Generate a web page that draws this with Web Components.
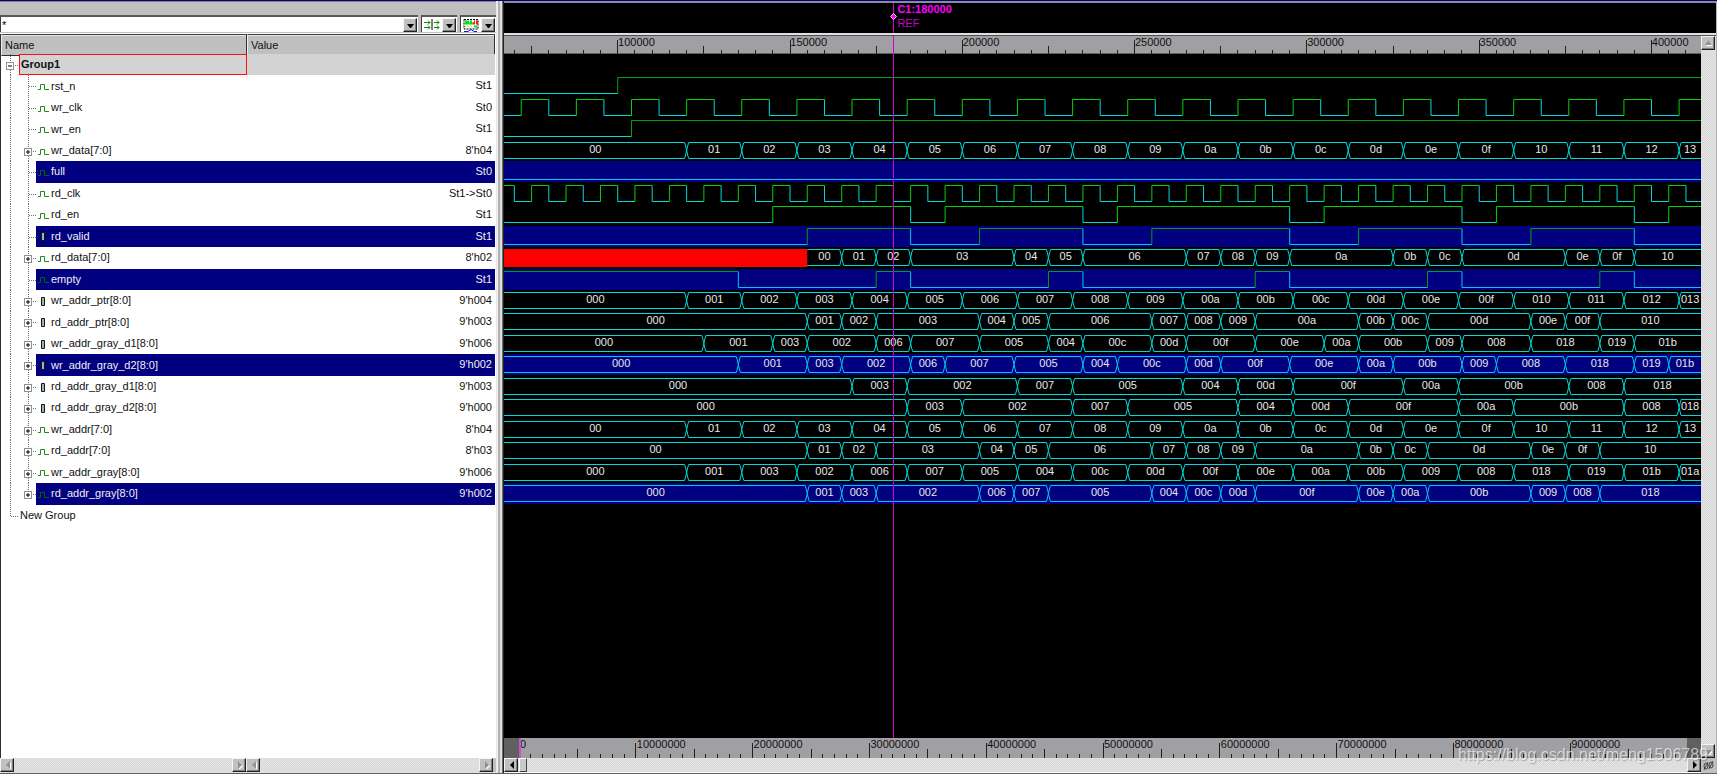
<!DOCTYPE html>
<html lang="en">
<head>
<meta charset="utf-8">
<title>Waveform viewer</title>
<style>
html, body { margin: 0; height: 100%; }
body { font: 11px/18px "Liberation Sans", Arial, sans-serif; background: #c0c0c0; color: #101010; overflow: hidden; }
</style>
</head>
<body>
<wave-app></wave-app>
<script>
const VIEW = { from: 67000, to: 414360 };
const SPAN = VIEW.to - VIEW.from;
const CURSOR = 180000;
const pct = t => ((t - VIEW.from) / SPAN * 100) + '%';

const level = (initial, ...edges) => ({ kind: 'level', initial, edges });
const clock = (start, half) => {
  const edges = [];
  for (let t = start; t < VIEW.to; t += half) edges.push(t / 1000);
  return edges;
};
const bus = text => {
  const parts = text.split(' ');
  const segments = [];
  let from = VIEW.from;
  parts.forEach((p, i) => {
    const [value, end] = p.split('@');
    const to = end ? end * 1000 : VIEW.to;
    segments.push({ value, from, to });
    from = to;
  });
  return { kind: 'bus', segments };
};
const counter = values => bus(values.split(' ').map((v, i, all) => i < all.length - 1 ? v + '@' + (120 + 16 * i) : v).join(' '));

const SIGNALS = [
  { name: 'rst_n', value: 'St1', wave: level(0, 100) },
  { name: 'wr_clk', value: 'St0', wave: level(0, ...clock(72000, 8000)) },
  { name: 'wr_en', value: 'St1', wave: level(0, 104) },
  { name: 'wr_data[7:0]', value: "8'h04", wave: counter('00 01 02 03 04 05 06 07 08 09 0a 0b 0c 0d 0e 0f 10 11 12 13') },
  { name: 'full', value: 'St0', selected: true, wave: level(0) },
  { name: 'rd_clk', value: 'St1->St0', wave: level(1, ...clock(70000, 5000)) },
  { name: 'rd_en', value: 'St1', wave: level(0, 145, 185, 195, 235, 245, 295, 305, 345, 355, 395, 405) },
  { name: 'rd_valid', value: 'St1', selected: true, reg: true, wave: level(0, 155, 185, 205, 235, 255, 295, 315, 345, 365, 395) },
  { name: 'rd_data[7:0]', value: "8'h02", wave: bus('x@155 00@165 01@175 02@185 03@215 04@225 05@235 06@265 07@275 08@285 09@295 0a@325 0b@335 0c@345 0d@375 0e@385 0f@395 10') },
  { name: 'empty', value: 'St1', selected: true, wave: level(1, 135, 175, 185, 225, 235, 285, 295, 335, 345, 385, 395) },
  { name: 'wr_addr_ptr[8:0]', value: "9'h004", reg: true, wave: counter('000 001 002 003 004 005 006 007 008 009 00a 00b 00c 00d 00e 00f 010 011 012 013') },
  { name: 'rd_addr_ptr[8:0]', value: "9'h003", reg: true, wave: bus('000@155 001@165 002@175 003@205 004@215 005@225 006@255 007@265 008@275 009@285 00a@315 00b@325 00c@335 00d@365 00e@375 00f@385 010') },
  { name: 'wr_addr_gray_d1[8:0]', value: "9'h006", reg: true, wave: bus('000@125 001@145 003@155 002@175 006@185 007@205 005@225 004@235 00c@255 00d@265 00f@285 00e@305 00a@315 00b@335 009@345 008@365 018@385 019@395 01b') },
  { name: 'wr_addr_gray_d2[8:0]', value: "9'h002", selected: true, reg: true, wave: bus('000@135 001@155 003@165 002@185 006@195 007@215 005@235 004@245 00c@265 00d@275 00f@295 00e@315 00a@325 00b@345 009@355 008@375 018@395 019@405 01b') },
  { name: 'rd_addr_gray_d1[8:0]', value: "9'h003", reg: true, wave: bus('000@168 003@184 002@216 007@232 005@264 004@280 00d@296 00f@328 00a@344 00b@376 008@392 018') },
  { name: 'rd_addr_gray_d2[8:0]', value: "9'h000", reg: true, wave: bus('000@184 003@200 002@232 007@248 005@280 004@296 00d@312 00f@344 00a@360 00b@392 008@408 018') },
  { name: 'wr_addr[7:0]', value: "8'h04", wave: counter('00 01 02 03 04 05 06 07 08 09 0a 0b 0c 0d 0e 0f 10 11 12 13') },
  { name: 'rd_addr[7:0]', value: "8'h03", wave: bus('00@155 01@165 02@175 03@205 04@215 05@225 06@255 07@265 08@275 09@285 0a@315 0b@325 0c@335 0d@365 0e@375 0f@385 10') },
  { name: 'wr_addr_gray[8:0]', value: "9'h006", wave: counter('000 001 003 002 006 007 005 004 00c 00d 00f 00e 00a 00b 009 008 018 019 01b 01a') },
  { name: 'rd_addr_gray[8:0]', value: "9'h002", selected: true, wave: bus('000@155 001@165 003@175 002@205 006@215 007@225 005@255 004@265 00c@275 00d@285 00f@315 00e@325 00a@335 00b@365 009@375 008@385 018') }
];

class Base extends HTMLElement {
  connectedCallback() {
    if (!this.shadowRoot) this.attachShadow({ mode: 'open' }).innerHTML =
      `<style>:host{display:block;box-sizing:border-box;min-width:0}*{box-sizing:border-box}</style>` + this.view();
  }
}

/* Bevelled arrow button */
customElements.define('arrow-button', class extends Base {
  view() {
    const shapes = { down: 'M0 3H7L4 7H3Z', up: 'M0 6H7L4 2H3Z', left: 'M2 4L6 0V8Z', right: 'M6 4L2 0V8Z' };
    const dir = this.getAttribute('dir-to');
    const off = this.hasAttribute('off');
    return `<style>
      :host { width: 14px; height: 14px; flex: none; }
      button { display: flex; align-items: center; justify-content: center; width: 100%; height: 100%; padding: 0; margin: 0;
        background: #c0c0c0; border: 1px solid; border-color: #f4f4f4 #202020 #202020 #f4f4f4; box-shadow: inset -1px -1px #808080; border-radius: 0; }
      svg { width: 7px; height: 8px; }
    </style><button type="button" aria-label="${this.getAttribute('label')}"><svg viewBox="0 0 7 8">
      ${off ? `<path d="${shapes[dir]}" fill="#fff" transform="translate(1 1)"/>` : ''}
      <path d="${shapes[dir]}" fill="${off ? '#909090' : '#000'}"/></svg></button>`;
  }
});

/* Scroll bar: arrow buttons at both ends of a stippled track */
customElements.define('scroll-bar', class extends Base {
  view() {
    const vertical = this.hasAttribute('vertical');
    const off = this.hasAttribute('on') ? '' : 'off';
    return `<style>
      :host { display: flex; flex-direction: ${vertical ? 'column' : 'row'};
        background: repeating-conic-gradient(#d8d8d8 0 25%, #e4e4e4 0 50%) 0 0 / 2px 2px; }
      .track { flex: 1; display: flex; }
      .thumb { width: 8px; margin-left: 1px; background: #c8c8c8; border: 1px solid; border-color: #fff #404040 #404040 #fff; }
    </style>
    <arrow-button dir-to="${vertical ? 'up' : 'left'}" ${off} label="Scroll back"></arrow-button>
    <div class="track">${this.hasAttribute('on') ? '<div class="thumb"></div>' : ''}</div>
    <arrow-button dir-to="${vertical ? 'down' : 'right'}" ${off} label="Scroll forward"></arrow-button>`;
  }
});

/* Filter box and the two icon drop-downs */
customElements.define('filter-bar', class extends Base {
  view() {
    return `<style>
      :host { display: flex; gap: 3px; padding: 13px 0 0; height: 31px; background: #c0c0c0; }
      .box { display: flex; align-items: center; height: 17px; background: #fff; border-top: 2px solid #585858; border-left: 1px solid #404040; padding-right: 1px; }
      .box.wide { flex: 1; }
      input { flex: 1; min-width: 0; border: 0; padding: 0 0 0 1px; height: 14px; font: 11px/14px "Liberation Sans", sans-serif; outline: 0; background: none; color: #000; }
      svg { margin: 0 2px; width: 16px; height: 14px; }
    </style>
    <div class="box wide"><input aria-label="Signal filter" value="*"><arrow-button dir-to="down" label="Filter history"></arrow-button></div>
    <div class="box"><svg viewBox="0 0 16 14" fill="none" stroke="#0a8a0a">
      <path d="M0 4.500H6M0 9.500H6M10 4.500H15M10 9.500H15M4 2.500L6 4.500L4 6.500M4 7.500L6 9.500L4 11.500M13 2.500L15 4.500L13 6.500M13 7.500L15 9.500L13 11.500"/>
      <path d="M8 1V12" stroke="#000"/></svg><arrow-button dir-to="down" label="Search direction"></arrow-button></div>
    <div class="box"><svg viewBox="0 0 16 14" fill="none">
      <path d="M1 1.500H15V11H1Z" stroke="#000" stroke-dasharray="2 1"/>
      <path d="M2 3.500H6M2 5.500H10M7 3.500H9M11 8.500H14" stroke="#00e020" stroke-width="2"/>
      <path d="M10 5.500H12M11 3.500H12M13 3.500H15M13 5.500H15" stroke="#ff1010" stroke-width="2"/>
      <path d="M2 8.500H9" stroke="#f0f080" stroke-width="2"/>
      <path d="M1 13.500H5L8 11.500L11 13.500H14" stroke="#1010f0"/></svg><arrow-button dir-to="down" label="Signal event"></arrow-button></div>`;
  }
});

/* Dotted tree guides with an optional expander */
customElements.define('tree-guide', class extends Base {
  view() {
    const kind = this.getAttribute('kind');
    const last = this.hasAttribute('last');
    const dot = 'fill="none" stroke="#707070" stroke-dasharray="1 1"';
    let lines = '', box = '', x = 0;
    if (kind === 'group') {
      lines = `<path d="M9.500 0V30M14 11.500H18" ${dot}/>`; x = 5; box = '-';
    } else if (kind === 'end') {
      lines = `<path d="M9.500 0V11.500H18" ${dot}/>`;
    } else {
      lines = `<path d="M9.500 0V30M27.500 0V${last ? 12 : 30}M28 11.500H36" ${dot}/>`;
      if (kind === 'bus') { x = 23; box = '+'; }
    }
    return `<style>
      :host { position: relative; flex: none; width: ${kind === 'group' || kind === 'end' ? 18 : 35}px; align-self: stretch; }
      svg.g { display: block; width: 100%; height: 100%; }
      button { position: absolute; left: ${x}px; top: 8px; width: 8px; height: 8px; padding: 0; border: 1px solid #909090; background: #fff; border-radius: 0; display: flex; }
      button svg { width: 6px; height: 6px; }
    </style><svg class="g">${lines}</svg>` +
    (box ? `<button type="button" aria-label="${box === '+' ? 'Expand' : 'Collapse'}"><svg viewBox="0 0 6 6"><path d="M1 3H5${box === '+' ? 'M3 1V5' : ''}" stroke="#000"/></svg></button>` : '');
  }
});

customElements.define('signal-icon', class extends Base {
  view() {
    const dim = this.hasAttribute('dim');
    return `<style>:host { flex: none; width: 12px; height: 10px; margin: 2px 1px 0 2px; } svg { display: block; width: 12px; height: 10px; }</style>
    <svg viewBox="0 0 12 10">` + (this.hasAttribute('reg')
      ? `<path d="M3.500 .5H6.500V8.500H3.500Z" fill="#9db4a8" stroke="#101810" />`
      : `<path d="M0 7.500H2.500V2.500H6.500V7.500H11" fill="none" stroke="${dim ? '#006400' : '#1e8c1e'}"/>`) + '</svg>';
  }
});

customElements.define('signal-table', class extends Base {
  view() {
    const rows = SIGNALS.map((s, i) => {
      const kind = s.name.includes('[') ? 'bus' : 'leaf';
      return `<tr class="${s.selected ? 'sel' : ''}"><td class="name"><tree-guide kind="${kind}" ${i === SIGNALS.length - 1 ? 'last' : ''}></tree-guide><span class="label"><signal-icon ${s.reg ? 'reg' : ''} ${s.selected ? 'dim' : ''}></signal-icon>${s.name}</span></td><td class="value">${s.value.replace('>', '&gt;')}</td></tr>`;
    }).join('');
    return `<style>
      :host { flex: 1; background: #fff; border-left: 1px solid #303030; }
      table { display: grid; grid-template-rows: 20px repeat(22, 1fr); height: 492px; line-height: 21px; margin-right: 1px; }
      thead, tbody { display: contents; }
      tr { display: grid; grid-template-columns: 246px 1fr; min-height: 0; }
      th { text-align: left; font-weight: normal; background: #c0c0c0; padding: 0 0 0 3px; line-height: 20px;
        border: 1px solid; border-top-color: #404040; border-left-color: #eee; border-right-color: #303030; border-bottom-color: #303030; box-shadow: inset 0 1px #e8e8e8; }
      td { padding: 0; display: flex; min-width: 0; min-height: 0; white-space: nowrap; }
      .label { display: flex; flex: 1; align-items: center; height: 100%; }
      .value { justify-content: flex-end; padding-right: 3px; }
      .sel .label, .sel .value { background: #000080; color: #f0f0f0; }
      .group .label { border: 1px solid #ff1010; background: #d3d3d3; font-weight: bold; padding-left: 1px; }
      .group .value { background: #d3d3d3; }
      .end .label { padding-left: 1px; }
    </style>
    <table><thead><tr><th>Name</th><th>Value</th></tr></thead>
    <tbody><tr class="group"><td class="name"><tree-guide kind="group"></tree-guide><span class="label">Group1</span></td><td class="value"></td></tr>
    ${rows}
    <tr class="end"><td class="name"><tree-guide kind="end"></tree-guide><span class="label">New Group</span></td><td></td></tr></tbody></table>`;
  }
});

customElements.define('signal-pane', class extends Base {
  view() {
    return `<style>
      :host { display: flex; flex-direction: column; width: 496px; border-top: 1px solid #808080; }
      .rule { height: 1px; background: #fff; }
      .bars { display: grid; grid-template-columns: 246px 247px; height: 15px; background: #c0c0c0; border-bottom: 1px solid #e0e0e0; }
    </style>
    <filter-bar></filter-bar><div class="rule"></div><signal-table></signal-table>
    <div class="bars"><scroll-bar></scroll-bar><scroll-bar></scroll-bar></div>`;
  }
});

/* Time ruler with ticks drawn in time units and labels laid out as equal cells */
customElements.define('time-ruler', class extends Base {
  view() {
    const n = k => Number(this.getAttribute(k));
    const from = n('from'), to = n('to'), step = n('step'), tall = n('tall'), mid = n('mid'), h = n('height');
    const minor = step / 10;
    let d = '';
    for (let t = Math.ceil(from / minor) * minor; t < to; t += minor) {
      const len = t % step === 0 ? tall : t % (step / 2) === 0 ? mid : 4;
      const x = (t - from) / (to - from) * 1000;
      d += `M${x} ${h - len}V${h}`;
    }
    const first = Math.ceil(from / step) * step;
    let labels = `<i style="flex:${first - from} 0 0"></i>`;
    for (let t = first; t < to; t += step) labels += `<span style="flex:${Math.min(step, to - t)} 0 0">${t}</span>`;
    return `<style>
      :host { display: grid; height: ${h}px; background: #a0a0a4; color: #101010; }
      svg, div { grid-area: 1 / 1; width: 100%; height: ${h}px; min-width: 0; }
      path { stroke: #202020; fill: none; vector-effect: non-scaling-stroke; shape-rendering: crispEdges; }
      div { display: flex; line-height: ${n('line')}px; }
      span, i { min-width: 0; padding-left: 1px; white-space: nowrap; }
      i { padding: 0; }
    </style><svg viewBox="0 0 1000 ${h}" preserveAspectRatio="none"><path d="${d}"/></svg><div>${labels}</div>`;
  }
});

/* One signal's trace */
customElements.define('wave-trace', class extends Base {
  view() {
    const s = SIGNALS[this.getAttribute('index')];
    const w = s.wave;
    const X = t => (t - VIEW.from) / 1000;
    const END = SPAN / 1000, HI = 2.5, LO = 18.5;
    let green = '', cyan = '', red = '', text = '';
    if (w.kind === 'level') {
      let on = w.initial, x = 0;
      for (const e of [...w.edges.map(v => X(v * 1000)), END]) {
        const y = on ? HI : LO;
        if (on) green += `M${x} ${y}H${e}`; else cyan += `M${x} ${y}H${e}`;
        if (e < END) { if (on) cyan += `M${e} ${HI}V${LO}`; else green += `M${e} ${LO}V${HI}`; }
        on = !on; x = e;
      }
    } else {
      w.segments.forEach((g, i) => {
        const a = X(g.from), b = X(g.to), last = i === w.segments.length - 1;
        const prevX = i > 0 && w.segments[i - 1].value === 'x';
        if (g.value === 'x') {
          red = `<rect x="0" y="2" width="${b}" height="18" fill="#f00"/>`;
        } else {
          const start = y => i === 0 || prevX ? `M${a} ${y}` : `M${a} 10.5L${a + 0.3} ${y < 10 ? 6 : 15}L${a + 0.6} ${y}`;
          const end = y => last ? `H${b}` : `H${b - 0.6}L${b - 0.3} ${y < 10 ? 6 : 15}L${b} 10.5`;
          cyan += start(HI) + end(HI) + start(LO) + end(LO);
        }
        text += `<span style="flex:${g.to - g.from} 0 0">${g.value === 'x' ? '' : g.value}</span>`;
      });
    }
    return `<style>
      :host { display: grid; min-height: 0; overflow: hidden; color: #e8e8e8; line-height: 18px; }
      svg, div { grid-area: 1 / 1; width: 100%; height: 21px; min-width: 0; min-height: 0; }
      svg { display: block; ${s.selected ? 'background: #000080;' : ''} }
      path { fill: none; vector-effect: non-scaling-stroke; }
      .level { shape-rendering: crispEdges; }
      div { display: flex; }
      span { min-width: 0; display: flex; justify-content: center; }
    </style>
    <svg viewBox="0 0 ${END} 21" preserveAspectRatio="none">${red}
      <path class="${w.kind}" d="${cyan}" stroke="${s.selected ? '#00c8e8' : '#00dada'}"/>
      <path class="${w.kind}" d="${green}" stroke="${s.name === 'rst_n' || s.name === 'wr_en' || s.name === 'empty' || s.name === 'rd_valid' ? '#00a010' : '#00d400'}"/></svg>
    <div>${text}</div>`;
  }
});

customElements.define('wave-pane', class extends Base {
  view() {
    return `<style>
      :host { display: grid; grid-template: 30px 3px 18px minmax(0, 1fr) 20px 15px / minmax(0, 1fr) 15px; min-height: 0;
        border-top: 2px solid #8c8c94; border-right: 1px solid #b0b0b0; background: #000; }
      .head { grid-area: 1 / 1; position: relative; color: #f0f; }
      .tag { position: absolute; left: ${pct(CURSOR)}; top: 0; margin-left: 4px; line-height: 13px; }
      .tag b, .tag span { display: block; white-space: nowrap; }
      .tag b { line-height: 13px; }
      .tag span { color: #c800c8; line-height: 15px; }
      .line { position: absolute; left: ${pct(CURSOR)}; top: 0; bottom: 0; width: 1px; background: #d000d0; }
      .dot { position: absolute; left: ${pct(CURSOR)}; top: 10px; width: 7px; height: 7px; margin-left: -3px; }
      .split { grid-area: 2 / 1 / 3 / 3; background: #e0e0e0; border-bottom: 1px solid #505050; }
      .main { grid-area: 3 / 1 / 5 / 2; position: relative; display: flex; flex-direction: column; min-height: 0; }
      .main time-ruler { border-bottom: 1px solid #606060; flex: none; }
      .rows { display: grid; grid-template-rows: repeat(22, minmax(0, 1fr)); height: 472px; flex: none; }
      .side { grid-area: 3 / 2 / 6 / 3; }
      .over { grid-area: 5 / 1; display: flex; background: #606060; padding: 0 14px 0 15px; position: relative; }
      .over time-ruler { flex: 1; }
      .zero { position: absolute; left: 15px; top: 0; bottom: 0; width: 2px; background: #d050d0; }
      .bottom { grid-area: 6 / 1; border-bottom: 1px solid #fff; }
      .corner { grid-area: 6 / 2; background: #c0c0c0; display: block; width: 15px; height: 15px; padding: 0; border: 0; }
      .corner svg { display: block; }
    </style>
    <div class="head"><div class="line"></div><svg class="dot" viewBox="0 0 7 7"><path d="M3.500 .5L6.500 3.500L3.500 6.500L.5 3.500Z" fill="#f0f" stroke="#f4c8f4"/></svg>
      <div class="tag"><b>C1:180000</b><span>REF</span></div></div>
    <div class="split"></div>
    <div class="main">
      <time-ruler from="${VIEW.from}" to="${VIEW.to}" step="50000" height="18" tall="14" mid="8" line="13"></time-ruler>
      <div class="rows"><div></div>${SIGNALS.map((s, i) => `<wave-trace index="${i}"></wave-trace>`).join('')}</div>
      <div class="line"></div>
    </div>
    <scroll-bar class="side" vertical></scroll-bar>
    <div class="over"><time-ruler from="0" to="100000000" step="10000000" height="20" tall="15" mid="9" line="13"></time-ruler><div class="zero"></div></div>
    <scroll-bar class="bottom" on></scroll-bar>
    <button class="corner" type="button" aria-label="Zoom to fit"><svg width="15" height="15" viewBox="0 0 15 15" fill="none" stroke="#404040"><ellipse cx="5" cy="8" rx="2" ry="3"/><ellipse cx="10" cy="7" rx="2" ry="3"/><path d="M3 12L7 4M8 11L12 3"/></svg></button>`;
  }
});

customElements.define('wave-app', class extends Base {
  view() {
    return `<style>
      :host { display: grid; grid-template-columns: 496px 8px minmax(0, 1fr); grid-template-rows: minmax(0, 1fr); min-height: 640px; height: 100vh;
        border-top: 1px solid #000080; border-bottom: 1px solid #606060; position: relative; }
      .divider { background: linear-gradient(90deg, #e8e8e8 0 1px, #f0f0f0 1px 2px, #b0b0b0 2px 4px, #e0e0e0 4px 6px, #707070 6px 7px, #202020 7px); }
      .mark { position: absolute; right: 9px; bottom: 9px; font-size: 16px; line-height: 18px; color: rgb(255 255 255 / .65); text-shadow: 1px 1px 1px rgb(0 0 0 / .25); pointer-events: none; }
    </style>
    <signal-pane></signal-pane><div class="divider"></div><wave-pane></wave-pane>
    <div class="mark">https://blog.csdn.net/meng1506789</div>`;
  }
});
</script>
</body>
</html>
